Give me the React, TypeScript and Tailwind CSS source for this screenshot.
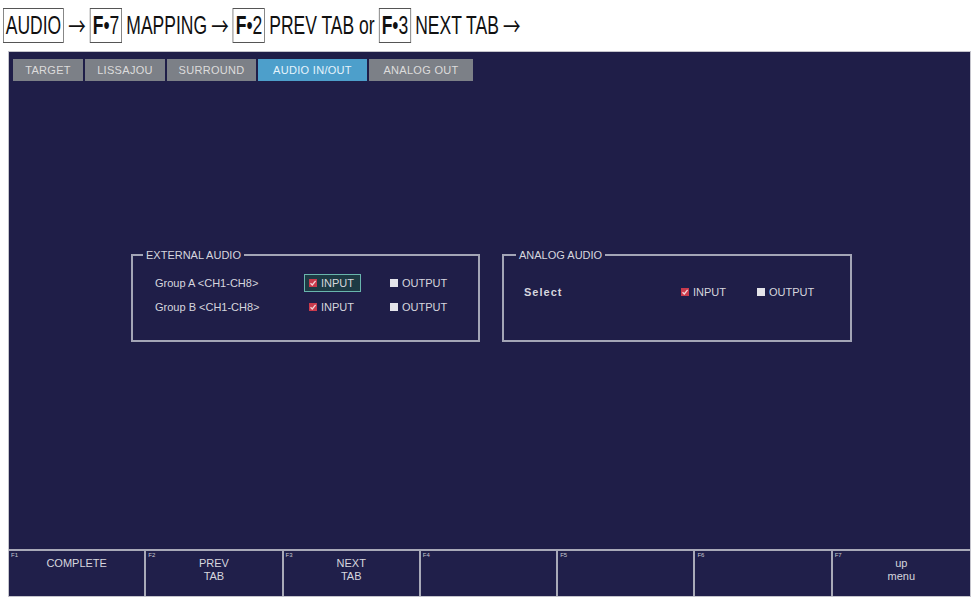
import React from 'react';

const tabs = [
  { label: 'TARGET', w: 'w-[70px]', active: false },
  { label: 'LISSAJOU', w: 'w-[80px]', active: false },
  { label: 'SURROUND', w: 'w-[89px]', active: false },
  { label: 'AUDIO IN/OUT', w: 'w-[109px]', active: true },
  { label: 'ANALOG OUT', w: 'w-[104px]', active: false },
];

const keys = [
  { id: 'F1', lines: ['COMPLETE'] },
  { id: 'F2', lines: ['PREV', 'TAB'] },
  { id: 'F3', lines: ['NEXT', 'TAB'] },
  { id: 'F4', lines: [] },
  { id: 'F5', lines: [] },
  { id: 'F6', lines: [] },
  { id: 'F7', lines: ['up', 'menu'] },
];

function Checked() {
  return (
    <svg width="8" height="8" viewBox="0 0 8 8" className="shrink-0">
      <rect width="8" height="8" fill="#c93a4c" />
      <path d="M1.5 4.2 L3.3 6 L6.6 1.8" stroke="#f3d6da" strokeWidth="1.3" fill="none" />
    </svg>
  );
}

function Unchecked() {
  return <span className="block w-[8px] h-[8px] bg-[#e4e4ea] shrink-0" />;
}

function Option({ label, checked, focused }: { label: string; checked: boolean; focused?: boolean }) {
  return (
    <div
      className={`flex items-center gap-[4px] h-[18px] pl-[4px] pr-[6px] w-fit border ${
        focused ? 'border-[#69b5ad] bg-[#1d3a44]' : 'border-transparent'
      }`}
    >
      {checked ? <Checked /> : <Unchecked />}
      <span>{label}</span>
    </div>
  );
}

function HBox({ children }: { children: React.ReactNode }) {
  return <span className="inline-block border border-[#555] px-[3px] leading-[33px]">{children}</span>;
}

function Arrow() {
  return (
    <span className="text-[25px] leading-[33px]" style={{ fontFamily: '"Noto Sans CJK JP", "DejaVu Sans", sans-serif' }}>
      →
    </span>
  );
}

export default function App() {
  return (
    <div className="w-[976px] h-[601px] bg-white overflow-hidden" style={{ fontFamily: '"Liberation Sans", Arial, sans-serif' }}>
      {/* Breadcrumb header */}
      <div className="h-[51px] pt-[7px] pl-[3px]">
        <div className="origin-top-left scale-x-[0.7] whitespace-nowrap text-[25px] text-[#111] flex items-center gap-[6px]">
          <HBox>AUDIO</HBox>
          <Arrow />
          <HBox><b className="font-bold">F</b>•7</HBox>
          <span>MAPPING</span>
          <Arrow />
          <HBox><b className="font-bold">F</b>•2</HBox>
          <span>PREV TAB or</span>
          <HBox><b className="font-bold">F</b>•3</HBox>
          <span>NEXT TAB</span>
          <Arrow />
        </div>
      </div>

      {/* Device screen */}
      <div className="ml-[8px] w-[963px] h-[546px] bg-[#1f1e48] border border-[#c4c4cc] flex flex-col text-[11px] text-[#d6d6de]">
        {/* Tabs */}
        <div className="flex gap-[2px] pt-[7px] pl-[4px]">
          {tabs.map((t) => (
            <div
              key={t.label}
              className={`${t.w} h-[22px] flex items-center justify-center tracking-[0.3px] ${
                t.active ? 'bg-[#4d9fcb] text-[#e6f4fc]' : 'bg-[#7c8087] text-[#dcdcdc]'
              }`}
            >
              {t.label}
            </div>
          ))}
        </div>

        {/* Main */}
        <div className="flex-1 pt-[167px] pl-[122px] flex gap-[22px] items-start">
          <fieldset className="w-[349px] h-[94px] border-2 border-[#a3a5b6] pl-[22px] pt-[12px]">
            <legend className="-ml-[12px] px-[3px] leading-[14px]">EXTERNAL AUDIO</legend>
            <div className="grid grid-cols-[149px_81px_auto] items-center gap-y-[6px]">
              <span>Group A &lt;CH1-CH8&gt;</span>
              <Option label="INPUT" checked focused />
              <Option label="OUTPUT" checked={false} />
              <span>Group B &lt;CH1-CH8&gt;</span>
              <Option label="INPUT" checked />
              <Option label="OUTPUT" checked={false} />
            </div>
          </fieldset>

          <fieldset className="w-[350px] h-[94px] border-2 border-[#a3a5b6] pl-[20px] pt-[21px]">
            <legend className="-ml-[8px] px-[3px] leading-[14px]">ANALOG AUDIO</legend>
            <div className="grid grid-cols-[152px_76px_auto] items-center">
              <span className="font-bold tracking-[1px]">Select</span>
              <Option label="INPUT" checked />
              <Option label="OUTPUT" checked={false} />
            </div>
          </fieldset>
        </div>

        {/* Function keys */}
        <div className="h-[47px] border-t-2 border-[#a8a9b8] grid grid-cols-7 divide-x-2 divide-[#a8a9b8] bg-[#201f4a]">
          {keys.map((k) => (
            <div key={k.id} className="relative pt-[6px] text-center leading-[13px]">
              <span className="absolute left-[2px] top-[1px] text-[6px] leading-[6px] text-[#c8c8d0]">{k.id}</span>
              {k.lines.map((l) => (
                <div key={l}>{l}</div>
              ))}
            </div>
          ))}
        </div>
      </div>
    </div>
  );
}
